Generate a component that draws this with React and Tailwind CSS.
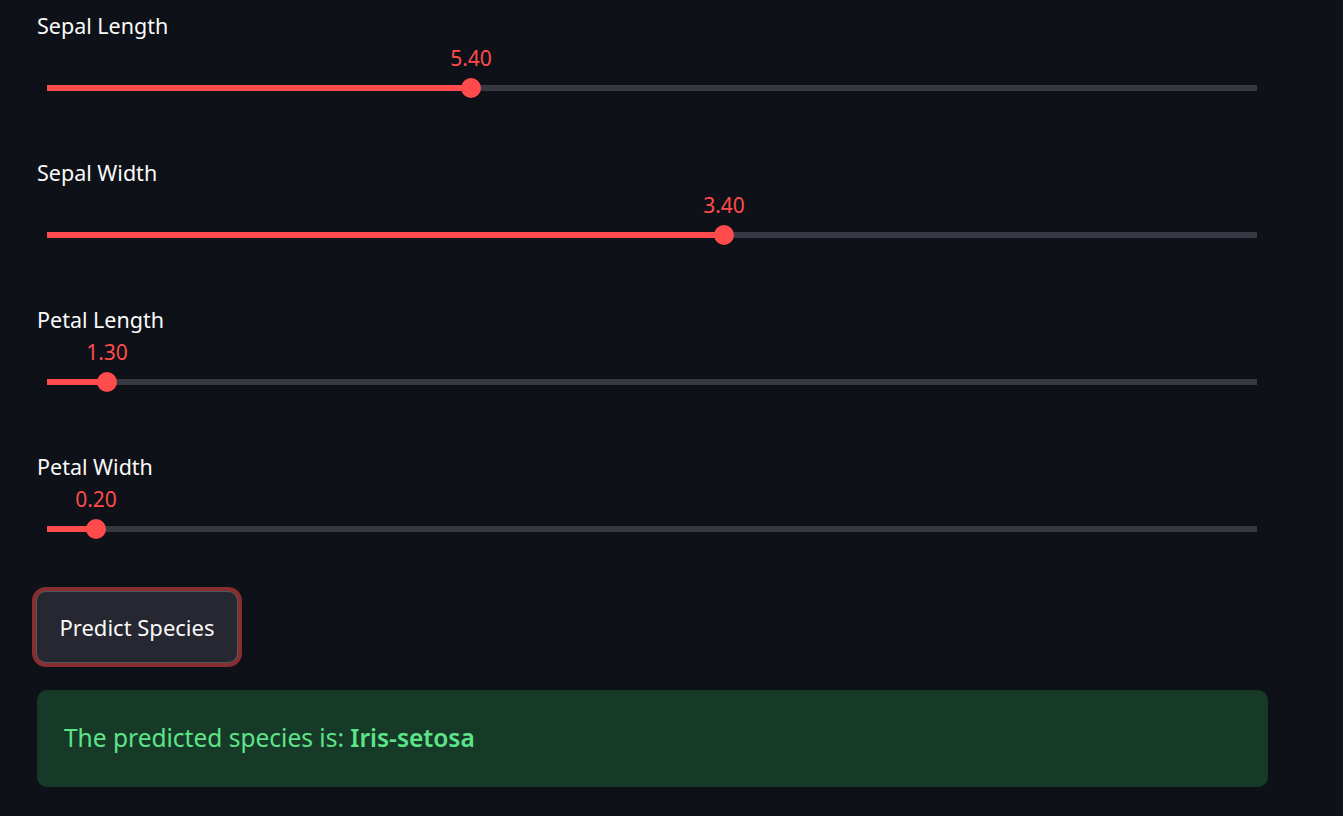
import React from 'react';

// pos = filled length of the 1210px track, in pixels
const sliders = [
  { label: 'Sepal Length', value: '5.40', pos: 424 },
  { label: 'Sepal Width', value: '3.40', pos: 677 },
  { label: 'Petal Length', value: '1.30', pos: 60 },
  { label: 'Petal Width', value: '0.20', pos: 49 },
];

const font = { fontFamily: '"Noto Sans", "Open Sans", sans-serif' };

function Slider({ label, value, pos }) {
  return (
    <div className="flex flex-col">
      <div className="h-[28px] text-[21.5px] leading-[28px] text-[#fafafa]">{label}</div>
      <div className="mt-[6px] flex h-[24px] pl-[10px]">
        <div className="shrink-0" style={{ width: pos }} />
        <div className="flex w-0 justify-center">
          <span className="whitespace-nowrap text-[21px] leading-[24px] text-[#ff4b4b]">{value}</span>
        </div>
      </div>
      <div className="mt-[8px] flex h-[20px] items-center pl-[10px] pr-[11px]">
        <div className="h-[6px] shrink-0 bg-[#ff4b4b]" style={{ width: pos }} />
        <div className="relative z-10 -mx-[10px] h-[20px] w-[20px] shrink-0 rounded-full bg-[#ff4b4b]" />
        <div className="h-[6px] flex-1 bg-[#363942]" />
      </div>
    </div>
  );
}

export default function App() {
  return (
    <div className="min-h-[816px] w-full bg-[#0e1117]" style={font}>
      <div className="ml-[37px] flex w-[1231px] flex-col pt-[12px]">
        <div className="flex flex-col gap-[61px]">
          {sliders.map((s) => (
            <Slider key={s.label} {...s} />
          ))}
        </div>

        <button className="-ml-[1px] mt-[52px] flex h-[72px] w-[202px] items-center justify-center rounded-[10px] border border-[#55565d] bg-[#262730] text-[22px] text-[#fafafa] shadow-[0_0_0_4px_rgba(255,75,75,0.5)]">
          Predict Species
        </button>

        <div className="mt-[27px] flex h-[97px] items-center rounded-[10px] bg-[#173a28] px-[27px] text-[24.5px] text-[#5ce488]">
          <span>
            The predicted species is: <span className="font-semibold">Iris-setosa</span>
          </span>
        </div>
      </div>
    </div>
  );
}
